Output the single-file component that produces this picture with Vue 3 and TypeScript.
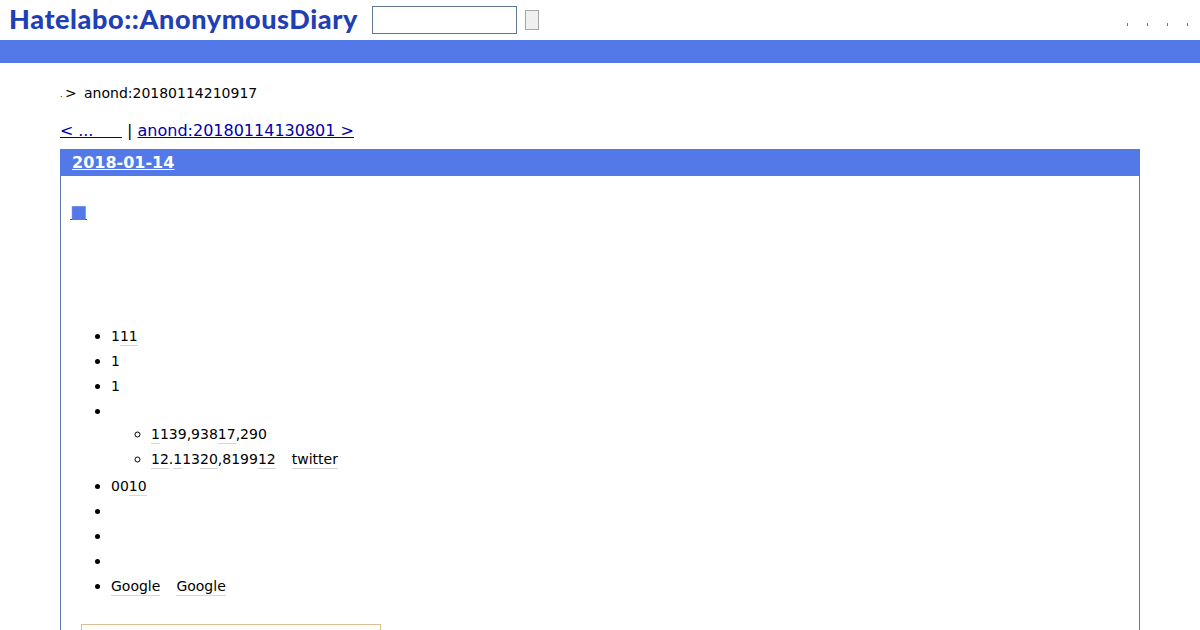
<script setup lang="ts">
const marks: number[] = [0, 1, 2, 3]
</script>

<template>
  <div class="page">
    <header class="top">
      <a class="logo">Hatelabo::AnonymousDiary</a>
      <input class="search" type="text" />
      <button class="go" type="button"></button>
      <div class="marks">
        <span v-for="m in marks" :key="m" class="mark"></span>
      </div>
    </header>
    <div class="band"></div>
    <main class="main">
      <p class="crumb"><span class="dot">.</span><span class="gt">&gt;</span><span>anond:20180114210917</span></p>
      <p class="pager"><a class="link prev">&lt; ...&nbsp;&nbsp;&nbsp;&nbsp;&nbsp;&nbsp;</a> | <a class="link">anond:20180114130801 &gt;</a></p>
      <section class="day">
        <h2 class="date"><a>2018-01-14</a></h2>
        <div class="body">
          <h3 class="sect"><a>■</a></h3>
          <ul class="list">
            <li class="row">1<a class="k">11</a></li>
            <li class="row">1</li>
            <li class="row">1</li>
            <li class="parent"><div class="row">&nbsp;</div>
              <ul class="sub">
                <li class="row"><a class="k">1</a>139,938<a class="k">17</a>,290</li>
                <li class="row"><a class="k">12</a>.<a class="k">1</a>13<a class="k">20</a>,8199<a class="k">12</a><a class="k gap">twitter</a></li>
              </ul>
            </li>
            <li class="row">00<a class="k">10</a></li>
            <li class="row">&nbsp;</li>
            <li class="row">&nbsp;</li>
            <li class="row">&nbsp;</li>
            <li class="row"><a class="k">Google</a><a class="k gap">Google</a></li>
          </ul>
          <div class="quote"></div>
        </div>
      </section>
    </main>
  </div>
</template>

<style>
html, body { margin: 0; background: #fff; overflow: hidden; }
</style>

<style scoped>
.page {
  font-family: "DejaVu Sans", sans-serif;
  font-size: 14px;
  color: #000;
  height: 630px;
  overflow: hidden;
}
.top {
  height: 40px;
  display: flex;
  align-items: center;
  padding-left: 9px;
  box-sizing: border-box;
}
.logo {
  font-family: "Lato", sans-serif;
  font-weight: 900;
  font-size: 27px;
  letter-spacing: 0.6px;
  color: #1f40b5;
  width: 363px;
  white-space: nowrap;
  line-height: 38px;
  height: 40px;
}
.search {
  width: 145px;
  height: 28px;
  box-sizing: border-box;
  border: 1px solid #5f7898;
  background: #fff;
  padding: 0;
  margin: 0 8px 0 0;
}
.go {
  width: 14px;
  height: 20px;
  box-sizing: border-box;
  border: 1px solid #a6a6a6;
  background: #efefef;
  padding: 0;
}
.marks {
  margin-left: auto;
  display: flex;
  gap: 19px;
  padding-right: 12px;
  padding-top: 8px;
}
.mark {
  width: 1px;
  height: 3px;
  background: #777;
}
.band {
  height: 23px;
  background: #5279e7;
}
.main {
  padding: 0 60px;
}
.crumb {
  margin: 0;
  padding-top: 21px;
  height: 38px;
  line-height: 18px;
  display: flex;
}
.dot {
  width: 5px;
  font-size: 8px;
  line-height: 22px;
}
.gt {
  width: 19px;
}
.pager {
  margin: 0;
  font-size: 16px;
  line-height: 18px;
  height: 27px;
}
.link {
  color: #0000a8;
  text-decoration: underline;
  cursor: pointer;
}
.prev {
  word-spacing: -0.33px;
}
.day {
  border: 1px solid #5f78a8;
  border-top: 0;
}
.date {
  margin: 0 -1px;
  height: 27px;
  box-sizing: border-box;
  background: #5279e7;
  padding-left: 12px;
  font-size: 16px;
  font-weight: 700;
  line-height: 27px;
  color: #fff;
}
.date a {
  color: #fff;
  text-decoration: underline;
}
.body {
  padding: 0 10px;
  height: 500px;
}
.sect {
  margin: 0;
  padding-top: 24px;
  height: 124px;
  box-sizing: border-box;
  font-size: 18px;
  line-height: 24px;
  font-weight: 400;
}
.sect a {
  margin-left: -1px;
  color: #5279e7;
  text-decoration: underline;
  text-decoration-color: #1f3fb0;
}
.list {
  margin: 24px 0 0;
  padding: 0 0 0 40px;
  list-style: disc;
}
.row {
  height: 25px;
  line-height: 25px;
}
.list li::marker {
  font-size: 15px;
}
.sub {
  margin: -2px 0 2px;
  padding-left: 40px;
  list-style: circle;
}
.k {
  border-bottom: 1px solid #d6d6d6;
  padding-bottom: 1px;
}
.gap {
  margin-left: 16px;
}
.quote {
  margin: 25px 0 0 10px;
  width: 300px;
  height: 60px;
  box-sizing: border-box;
  border: 1px solid #dcbf96;
  background: #fffefa;
}
</style>
